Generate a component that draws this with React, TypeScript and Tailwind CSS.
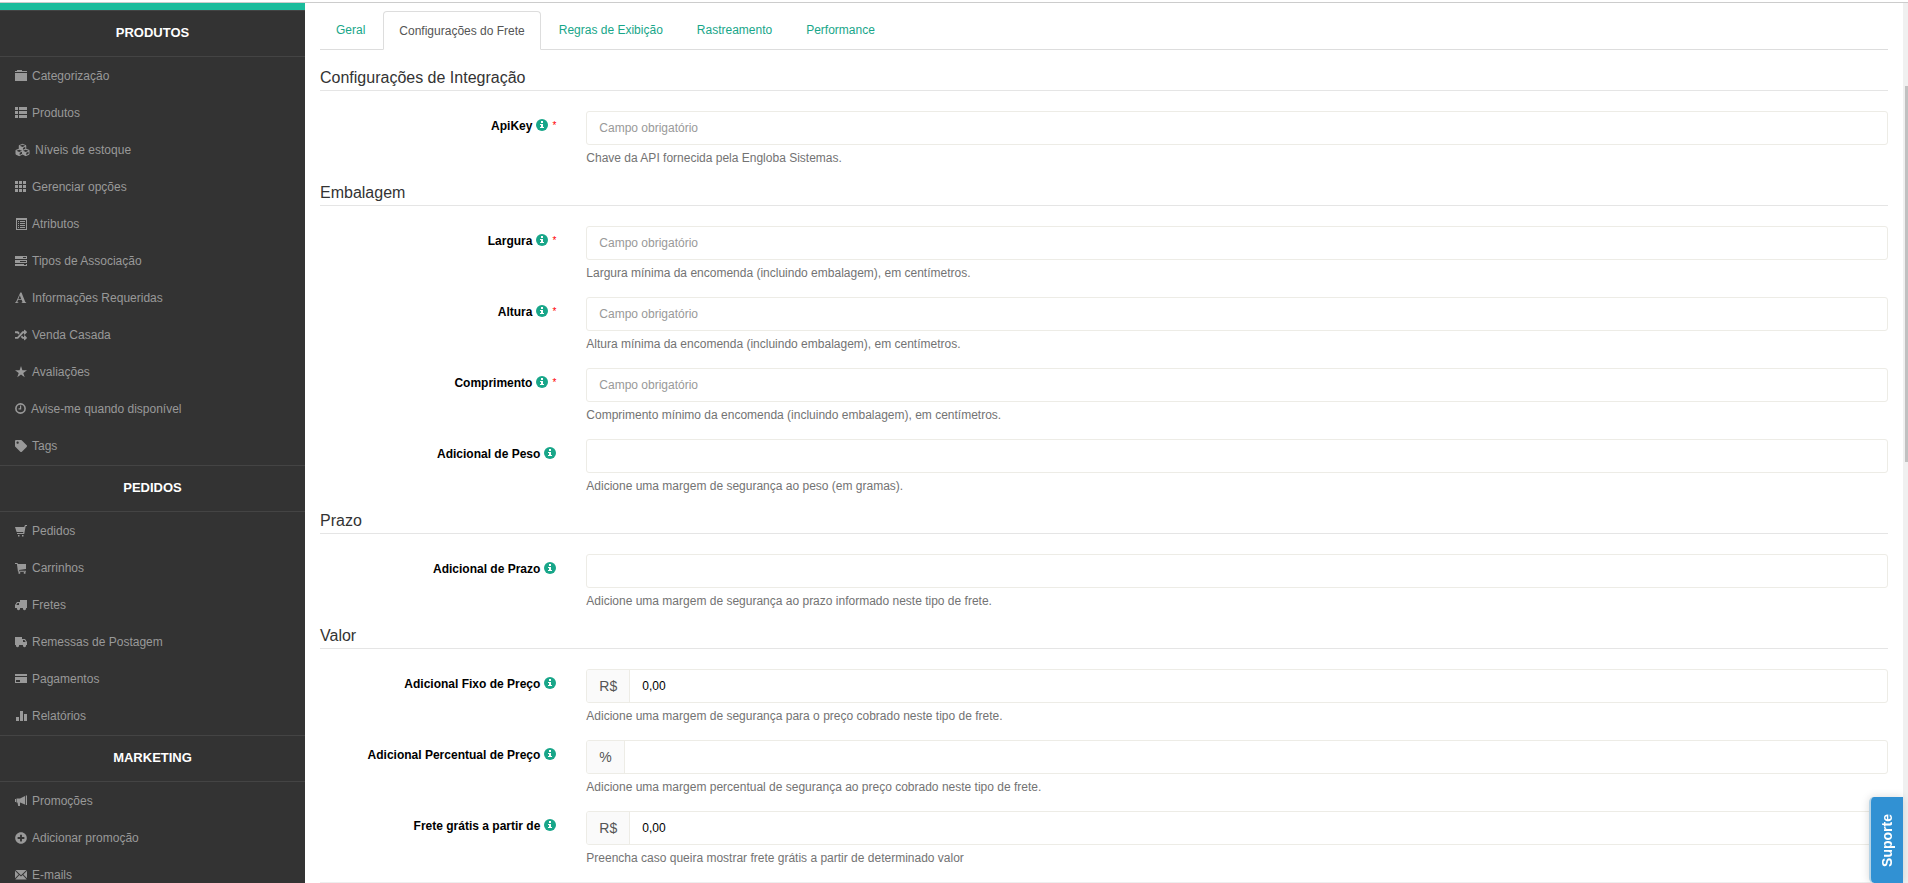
import type { ReactNode } from 'react';
import { FaCubes, FaPlusCircle, FaRandom, FaTag } from 'react-icons/fa';

/* ---------- small sidebar glyphs, drawn on a 12px grid ---------- */

function Glyph({ children, crisp = true }: { children: ReactNode; crisp?: boolean }) {
  return (
    <svg
      viewBox="0 0 12 12"
      className="size-3 shrink-0"
      fill="currentColor"
      shapeRendering={crisp ? 'crispEdges' : 'auto'}
      aria-hidden="true"
    >
      {children}
    </svg>
  );
}

const icons = {
  folder: (
    <Glyph>
      <path d="M2 0h5v1H2zM0 1h12v1H0zM0 3h12v8H0z" />
    </Glyph>
  ),
  thList: (
    <Glyph>
      <path d="M0 0h3v3H0zM4 0h8v3H4zM0 4h3v3H0zM4 4h8v3H4zM0 8h3v3H0zM4 8h8v3H4z" />
    </Glyph>
  ),
  th: (
    <Glyph>
      <path d="M0 0h3v3H0zM4 0h3v3H4zM8 0h3v3H8zM0 4h3v3H0zM4 4h3v3H4zM8 4h3v3H8zM0 8h3v3H0zM4 8h3v3H4zM8 8h3v3H8z" />
    </Glyph>
  ),
  listAlt: (
    <Glyph>
      <path fillRule="evenodd" d="M1 0h11v12H1zM2 2v9h9V2z" />
      <path d="M3 3h1v1H3zM5 3h5v1H5zM3 5h1v1H3zM5 5h5v1H5zM3 7h1v1H3zM5 7h5v1H5zM3 9h1v1H3zM5 9h5v1H5z" />
    </Glyph>
  ),
  tasks: (
    <Glyph>
      <path fillRule="evenodd" d="M0 1h12v3H0zM8 2v1h3V2zM0 5h12v3H0zM5 6v1h6V6zM0 9h12v2H0zM9 9v1h2V9z" />
    </Glyph>
  ),
  font: (
    <Glyph crisp={false}>
      <path
        fillRule="evenodd"
        d="M5.3.5h1.2l3.7 9.3c.2.5.5.7 1 .8v.4H6.600v-.4c.8-.1 1-.4.7-1.100l-.7-1.800H3.100l-.5 1.300c-.4 1 0 1.500.9 1.600v.4H0v-.4c.7-.1 1-.5 1.400-1.400zM4.800 3.300 3.400 6.900h2.800z"
      />
    </Glyph>
  ),
  star: (
    <Glyph crisp={false}>
      <path d="M6 0 7.400 4.200H12L8.300 6.900l1.400 4.300L6 8.600l-3.700 2.600 1.400-4.300L0 4.200h4.600z" />
    </Glyph>
  ),
  clock: (
    <svg viewBox="0 0 11 11" className="size-[11px] shrink-0" fill="none" stroke="currentColor" aria-hidden="true">
      <circle cx="5.500" cy="5.500" r="4.600" strokeWidth="1.600" />
      <path d="M5.600 2.500v3.300H3.500" strokeWidth="1.200" />
    </svg>
  ),
  cartSolid: (
    <Glyph crisp={false}>
      <path d="M0 2h9.200l.8-2h2v1h-1.300L9.200 9H2V8h6.100l.3-1H1.600zM3 10h1.500v1.500H3zM7 10h1.500v1.500H7z" />
    </Glyph>
  ),
  cart: (
    <Glyph crisp={false}>
      <path d="M0 1h2.500l.4 1H11v5L4 8v.8h7v1H3L1.900 2H0zM3.500 10h1.700v1.700H3.500zM8.800 10h1.700v1.700H8.800z" />
    </Glyph>
  ),
  truckLeft: (
    <Glyph crisp={false}>
      <path fillRule="evenodd" d="M5 1h7v8h-1a1.600 1.600 0 1 1-3 0H5a1.600 1.600 0 1 1-3 0H0V6l2-3h3zM4 4H2.600L1.300 6H4z" />
    </Glyph>
  ),
  truckRight: (
    <Glyph crisp={false}>
      <path fillRule="evenodd" d="M0 1h7v2h3l2 3v3h-1a1.600 1.600 0 1 1-3 0H4a1.600 1.600 0 1 1-3 0H0zM8 4v2h2.700L9.400 4z" />
    </Glyph>
  ),
  card: (
    <Glyph>
      <path fillRule="evenodd" d="M0 1h12v2H0zM0 4h12v6H0zM1 7v2h4V7z" />
    </Glyph>
  ),
  stats: (
    <Glyph>
      <path d="M1 7h3v4H1zM5 1h3v10H5zM9 4h3v7H9z" />
    </Glyph>
  ),
  bullhorn: (
    <Glyph crisp={false}>
      <path d="M0 4h1v3H0zM1.500 3.500H5L10 1v8.500L5 7.500v3.500H3.200L2.500 7.500h-1zM10.800.5H12v9.500h-1.200z" />
    </Glyph>
  ),
  envelope: (
    <Glyph crisp={false}>
      <path d="M.5 1h11L6 6.300zM0 1.800 3.700 5.400 0 9.200zM12 1.800 8.300 5.400 12 9.200zM4.400 6.100 6 7.600l1.600-1.500L11.700 10.500H.3z" />
    </Glyph>
  ),
  cubes: <FaCubes className="h-[14px] w-[15px] shrink-0" />,
  random: <FaRandom className="size-3 shrink-0" />,
  tag: <FaTag className="size-3 shrink-0" />,
  plus: <FaPlusCircle className="size-3 shrink-0" />,
};

type IconName = keyof typeof icons;

const menu: { title: string; items: [IconName, string][] }[] = [
  {
    title: 'PRODUTOS',
    items: [
      ['folder', 'Categorização'],
      ['thList', 'Produtos'],
      ['cubes', 'Níveis de estoque'],
      ['th', 'Gerenciar opções'],
      ['listAlt', 'Atributos'],
      ['tasks', 'Tipos de Associação'],
      ['font', 'Informações Requeridas'],
      ['random', 'Venda Casada'],
      ['star', 'Avaliações'],
      ['clock', 'Avise-me quando disponível'],
      ['tag', 'Tags'],
    ],
  },
  {
    title: 'PEDIDOS',
    items: [
      ['cartSolid', 'Pedidos'],
      ['cart', 'Carrinhos'],
      ['truckLeft', 'Fretes'],
      ['truckRight', 'Remessas de Postagem'],
      ['card', 'Pagamentos'],
      ['stats', 'Relatórios'],
    ],
  },
  {
    title: 'MARKETING',
    items: [
      ['bullhorn', 'Promoções'],
      ['plus', 'Adicionar promoção'],
      ['envelope', 'E-mails'],
    ],
  },
];

const tabs = ['Geral', 'Configurações do Frete', 'Regras de Exibição', 'Rastreamento', 'Performance'];

type FieldDef = {
  id: string;
  label: string;
  help: string;
  required?: boolean;
  addon?: string;
  value?: string;
};

const sections: { title: string; fields: FieldDef[] }[] = [
  {
    title: 'Configurações de Integração',
    fields: [{ id: 'apikey', label: 'ApiKey', help: 'Chave da API fornecida pela Engloba Sistemas.', required: true }],
  },
  {
    title: 'Embalagem',
    fields: [
      {
        id: 'largura',
        label: 'Largura',
        help: 'Largura mínima da encomenda (incluindo embalagem), em centímetros.',
        required: true,
      },
      {
        id: 'altura',
        label: 'Altura',
        help: 'Altura mínima da encomenda (incluindo embalagem), em centímetros.',
        required: true,
      },
      {
        id: 'comprimento',
        label: 'Comprimento',
        help: 'Comprimento mínimo da encomenda (incluindo embalagem), em centímetros.',
        required: true,
      },
      { id: 'peso', label: 'Adicional de Peso', help: 'Adicione uma margem de segurança ao peso (em gramas).' },
    ],
  },
  {
    title: 'Prazo',
    fields: [
      {
        id: 'prazo',
        label: 'Adicional de Prazo',
        help: 'Adicione uma margem de segurança ao prazo informado neste tipo de frete.',
      },
    ],
  },
  {
    title: 'Valor',
    fields: [
      {
        id: 'preco-fixo',
        label: 'Adicional Fixo de Preço',
        help: 'Adicione uma margem de segurança para o preço cobrado neste tipo de frete.',
        addon: 'R$',
        value: '0,00',
      },
      {
        id: 'preco-percentual',
        label: 'Adicional Percentual de Preço',
        help: 'Adicione uma margem percentual de segurança ao preço cobrado neste tipo de frete.',
        addon: '%',
      },
      {
        id: 'frete-gratis',
        label: 'Frete grátis a partir de',
        help: 'Preencha caso queira mostrar frete grátis a partir de determinado valor',
        addon: 'R$',
        value: '0,00',
      },
    ],
  },
];

function Sidebar() {
  return (
    <aside className="w-[305px] shrink-0 bg-[#333333]">
      <div className="h-[7px] bg-[#1abc9c]" />
      {menu.map((group) => (
        <nav key={group.title} aria-label={group.title} className="pb-px">
          <h2 className="h-[47px] border-y border-[#444444] pt-3 text-center text-[13px] leading-5 font-bold text-white">
            {group.title}
          </h2>
          <ul>
            {group.items.map(([icon, label]) => (
              <li key={label}>
                <a href="#" className="flex h-[37px] items-center gap-[5px] px-[15px] text-[12px] text-[#999999]">
                  {icons[icon]}
                  {label}
                </a>
              </li>
            ))}
          </ul>
        </nav>
      ))}
    </aside>
  );
}

function InfoIcon() {
  return (
    <svg viewBox="0 0 12 12" className="mt-px size-3 shrink-0" aria-hidden="true">
      <circle cx="6" cy="6" r="6" fill="#18a689" />
      <path d="M5 2h2v2H5zM4 5h3v3h1v1H4V8h1V6H4z" fill="#fff" shapeRendering="crispEdges" />
    </svg>
  );
}

function Field({ field }: { field: FieldDef }) {
  return (
    <div className="flex">
      <label
        htmlFor={field.id}
        className="flex w-1/6 items-start justify-end gap-1 px-[15px] pt-[7px] text-[12px] leading-4 font-bold text-black"
      >
        {field.label}
        <InfoIcon />
        {field.required && <span className="text-[10px] font-normal text-[#ff0000]">*</span>}
      </label>
      <div className="w-5/6 px-[15px]">
        <div className="flex h-[34px] overflow-hidden rounded-[3px] border border-[#edece6] bg-white">
          {field.addon && (
            <span className="flex items-center border-r border-[#edece6] bg-[#fafafa] px-3 text-[14px] text-[#555555]">
              {field.addon}
            </span>
          )}
          <input
            id={field.id}
            type="text"
            defaultValue={field.value}
            placeholder={field.required ? 'Campo obrigatório' : undefined}
            className="min-w-0 flex-1 px-3 text-[12px] text-black outline-none placeholder:text-[#999999]"
          />
        </div>
        <p className="pt-1 text-[12px] leading-[18px] text-[#737373]">{field.help}</p>
      </div>
    </div>
  );
}

export default function App() {
  return (
    <div className="h-screen overflow-hidden bg-white pt-[2px] font-['Liberation_Sans',Arial,sans-serif] text-[12px]">
      <div className="flex h-full items-stretch overflow-hidden border-t border-[#cccccc]">
        <Sidebar />

        <main className="min-w-0 flex-1 pt-2">
          <div role="tablist" className="mx-[15px] flex gap-[2px] border-b border-[#dddddd]">
            {tabs.map((tab) => {
              const active = tab === 'Configurações do Frete';
              return (
                <button
                  key={tab}
                  type="button"
                  role="tab"
                  aria-selected={active}
                  className={
                    active
                      ? '-mb-px h-[39px] rounded-t border border-[#dddddd] border-b-white bg-white px-[15px] text-[#555555]'
                      : 'h-[38px] px-4 text-[#18a689]'
                  }
                >
                  {tab}
                </button>
              );
            })}
          </div>

          <form className="pt-[2px]">
            {sections.map((section) => (
              <section key={section.title}>
                <h3 className="mx-[15px] mb-5 border-b border-[#e5e5e5] pt-4 pb-[2px] text-[16px] leading-5 text-[#333333]">
                  {section.title}
                </h3>
                <div className="flex flex-col gap-[15px]">
                  {section.fields.map((field) => (
                    <Field key={field.id} field={field} />
                  ))}
                </div>
              </section>
            ))}
            <hr className="mx-[15px] mt-[15px] border-[#eeeeee]" />
          </form>
        </main>

        {/* scrollbar track */}
        <div className="w-[5px] shrink-0 bg-[#f0f0f0] pt-[83px] pl-[2px]">
          <div className="h-[376px] bg-[#c1c1c1]" />
        </div>
      </div>

      <button
        type="button"
        className="fixed right-[5px] bottom-0 flex h-[86px] w-[34px] items-center justify-center rounded-l-[5px] border-l-2 border-[#b5d3e6] bg-[#3191d3] shadow-[0_0_8px_rgba(0,0,0,0.15)]"
      >
        <span className="rotate-180 text-[14px] leading-none font-bold text-white [writing-mode:vertical-rl]">
          Suporte
        </span>
      </button>
    </div>
  );
}
